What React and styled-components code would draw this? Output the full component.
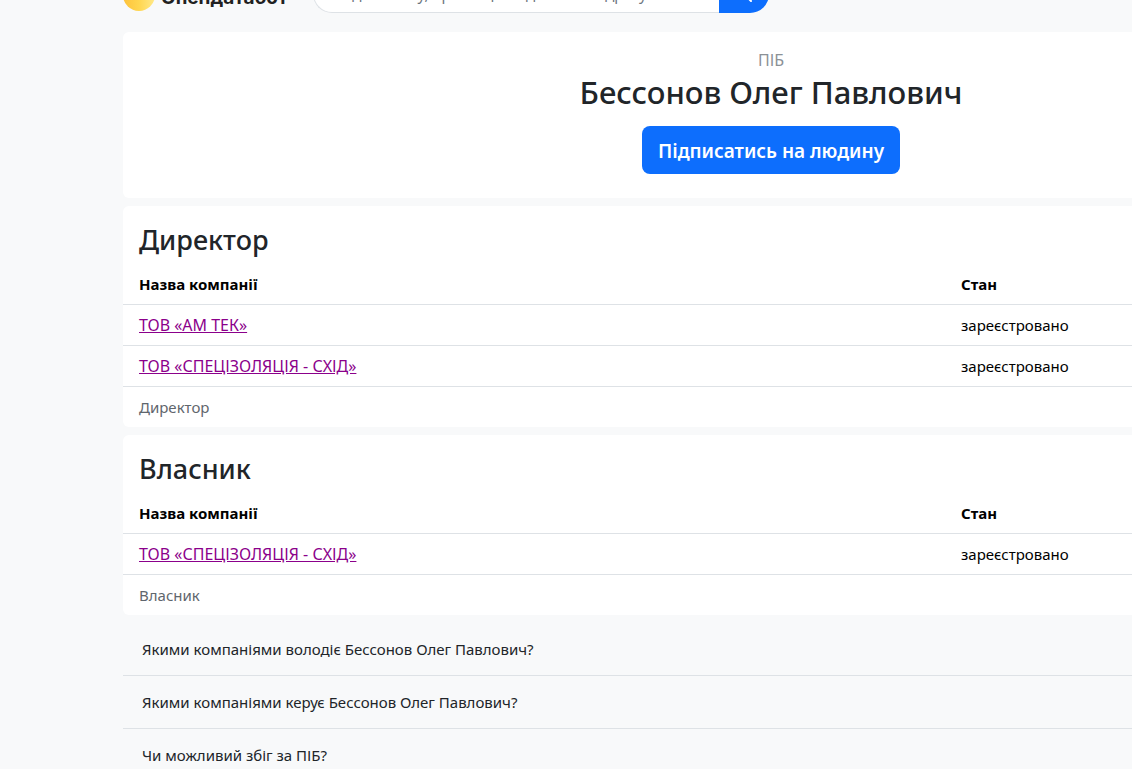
import React from 'react';
import styled, { createGlobalStyle } from 'styled-components';

const GlobalStyle = createGlobalStyle`
  *, *::before, *::after {
    box-sizing: border-box;
  }

  body {
    margin: 0;
    background: #f8f9fa;
    color: #212529;
    font-family: 'Segoe UI', 'Noto Sans', 'Liberation Sans', sans-serif;
    font-size: 15px;
    line-height: 24px;
  }
`;

const Page = styled.div`
  max-height: 100vh;
  overflow: hidden;
`;

const Container = styled.div`
  min-width: 1419px;
  padding-left: 123px;
`;

const Header = styled.header`
  display: flex;
  align-items: flex-end;
  height: 13px;
  margin-bottom: 19px;
`;

const Logo = styled.a`
  display: flex;
  align-items: center;
  gap: 6px;
  flex: none;
  width: 190px;
  height: 36px;
  color: #212121;
  font-family: Inter, 'Noto Sans', sans-serif;
  font-size: 19px;
  font-weight: 700;
  text-decoration: none;
`;

const LogoText = styled.span`
  padding-top: 6px;
`;

const SearchForm = styled.form`
  display: flex;
  flex: none;
  width: 456px;
`;

const SearchInput = styled.input`
  flex: 1;
  min-width: 0;
  height: 38px;
  padding: 6px 12px;
  border: 1px solid #dee2e6;
  border-right: 0;
  border-radius: 19px 0 0 19px;
  background: #fff;
  color: #212529;
  font: inherit;

  &::placeholder {
    color: #6c757d;
    opacity: 1;
  }
`;

const SearchButton = styled.button`
  display: flex;
  align-items: center;
  justify-content: center;
  width: 50px;
  height: 38px;
  padding: 0;
  border: 0;
  border-radius: 0 19px 19px 0;
  background: #0d6efd;
  color: #fff;
`;

const Card = styled.section`
  margin-bottom: 8px;
  border-radius: 6px;
  background: #fff;
  overflow: hidden;
`;

const PersonCard = styled(Card)`
  display: flex;
  flex-direction: column;
  align-items: center;
  padding: 16px 16px 24px;
`;

const Label = styled.div`
  color: #8b9196;
  font-size: 16px;
`;

const Name = styled.h1`
  margin: 0 0 14px;
  font-size: 31px;
  font-weight: 500;
  line-height: 40px;
`;

const SubscribeButton = styled.button`
  height: 48px;
  padding: 2px 16px 0;
  border: 0;
  border-radius: 8px;
  background: #0d6efd;
  color: #fff;
  font-family: inherit;
  font-size: 19px;
  font-weight: 600;
`;

const CardTitle = styled.h2`
  margin: 0;
  padding: 16px 16px 6px;
  font-size: 27px;
  font-weight: 500;
  line-height: 36px;
`;

const Table = styled.table`
  width: 100%;
  border-collapse: collapse;
  table-layout: fixed;
  color: #000;
`;

const cell = `
  padding: 8px 16px;
  border-bottom: 1px solid #dee2e6;
  text-align: left;
`;

const HeadCell = styled.th`
  ${cell}
  width: ${props => props.$width || 'auto'};
  font-weight: 700;
`;

const Cell = styled.td`
  ${cell}
`;

const CompanyLink = styled.a`
  display: block;
  color: #8b008b;
  font-size: 16px;
  text-decoration: underline;
`;

const CardFooter = styled.div`
  padding: 8px 16px;
  color: #5f666d;
`;

const Questions = styled.div`
  display: flex;
  flex-direction: column;
`;

const Question = styled.button`
  padding: 14px 19px;
  border: 0;
  border-bottom: 1px solid #dee2e6;
  background: transparent;
  color: #212529;
  font: inherit;
  text-align: left;
`;

const person = 'Бессонов Олег Павлович';

const roles = [
  { title: 'Директор', companies: ['ТОВ «АМ ТЕК»', 'ТОВ «СПЕЦІЗОЛЯЦІЯ - СХІД»'] },
  { title: 'Власник', companies: ['ТОВ «СПЕЦІЗОЛЯЦІЯ - СХІД»'] }
];

const questions = [
  `Якими компаніями володіє ${person}?`,
  `Якими компаніями керує ${person}?`,
  'Чи можливий збіг за ПІБ?'
];

const LogoIcon = () => (
  <svg width="32" height="32" viewBox="0 0 32 32" aria-hidden="true">
    <defs>
      <linearGradient id="coin" x1="0" y1="0" x2="1" y2="0">
        <stop offset="0" stopColor="#fdc23c" />
        <stop offset="0.5" stopColor="#ffd64f" />
        <stop offset="1" stopColor="#ffe98a" />
      </linearGradient>
    </defs>
    <circle cx="16" cy="16" r="16" fill="url(#coin)" />
  </svg>
);

const SearchIcon = () => (
  <svg width="16" height="16" viewBox="0 0 16 16" fill="currentColor" aria-hidden="true">
    <path d="M11.742 10.344a6.5 6.5 0 1 0-1.397 1.398h-.001q.044.06.098.115l3.85 3.85a1 1 0 0 0 1.415-1.414l-3.85-3.85a1 1 0 0 0-.115-.1zM12 6.5a5.5 5.5 0 1 1-11 0 5.5 5.5 0 0 1 11 0" />
  </svg>
);

const RoleCard = ({ title, companies }) => (
  <Card>
    <CardTitle>{title}</CardTitle>
    <Table>
      <thead>
        <tr>
          <HeadCell>Назва компанії</HeadCell>
          <HeadCell $width="474px">Стан</HeadCell>
        </tr>
      </thead>
      <tbody>
        {companies.map(company => (
          <tr key={company}>
            <Cell>
              <CompanyLink href="#company">{company}</CompanyLink>
            </Cell>
            <Cell>зареєстровано</Cell>
          </tr>
        ))}
      </tbody>
    </Table>
    <CardFooter>{title}</CardFooter>
  </Card>
);

export default function App() {
  return (
    <Page>
      <GlobalStyle />
      <Container>
        <Header>
          <Logo href="#home">
            <LogoIcon />
            <LogoText>Опендатабот</LogoText>
          </Logo>
          <SearchForm role="search">
            <SearchInput
              type="search"
              aria-label="Пошук"
              placeholder="Введіть назву, прізвище людини або адресу"
            />
            <SearchButton type="button" aria-label="Знайти">
              <SearchIcon />
            </SearchButton>
          </SearchForm>
        </Header>
        <main>
          <PersonCard>
            <Label>ПІБ</Label>
            <Name>{person}</Name>
            <SubscribeButton type="button">Підписатись на людину</SubscribeButton>
          </PersonCard>
          {roles.map(role => <RoleCard key={role.title} {...role} />)}
          <Questions>
            {questions.map(question => (
              <Question key={question} type="button">{question}</Question>
            ))}
          </Questions>
        </main>
      </Container>
    </Page>
  );
}
